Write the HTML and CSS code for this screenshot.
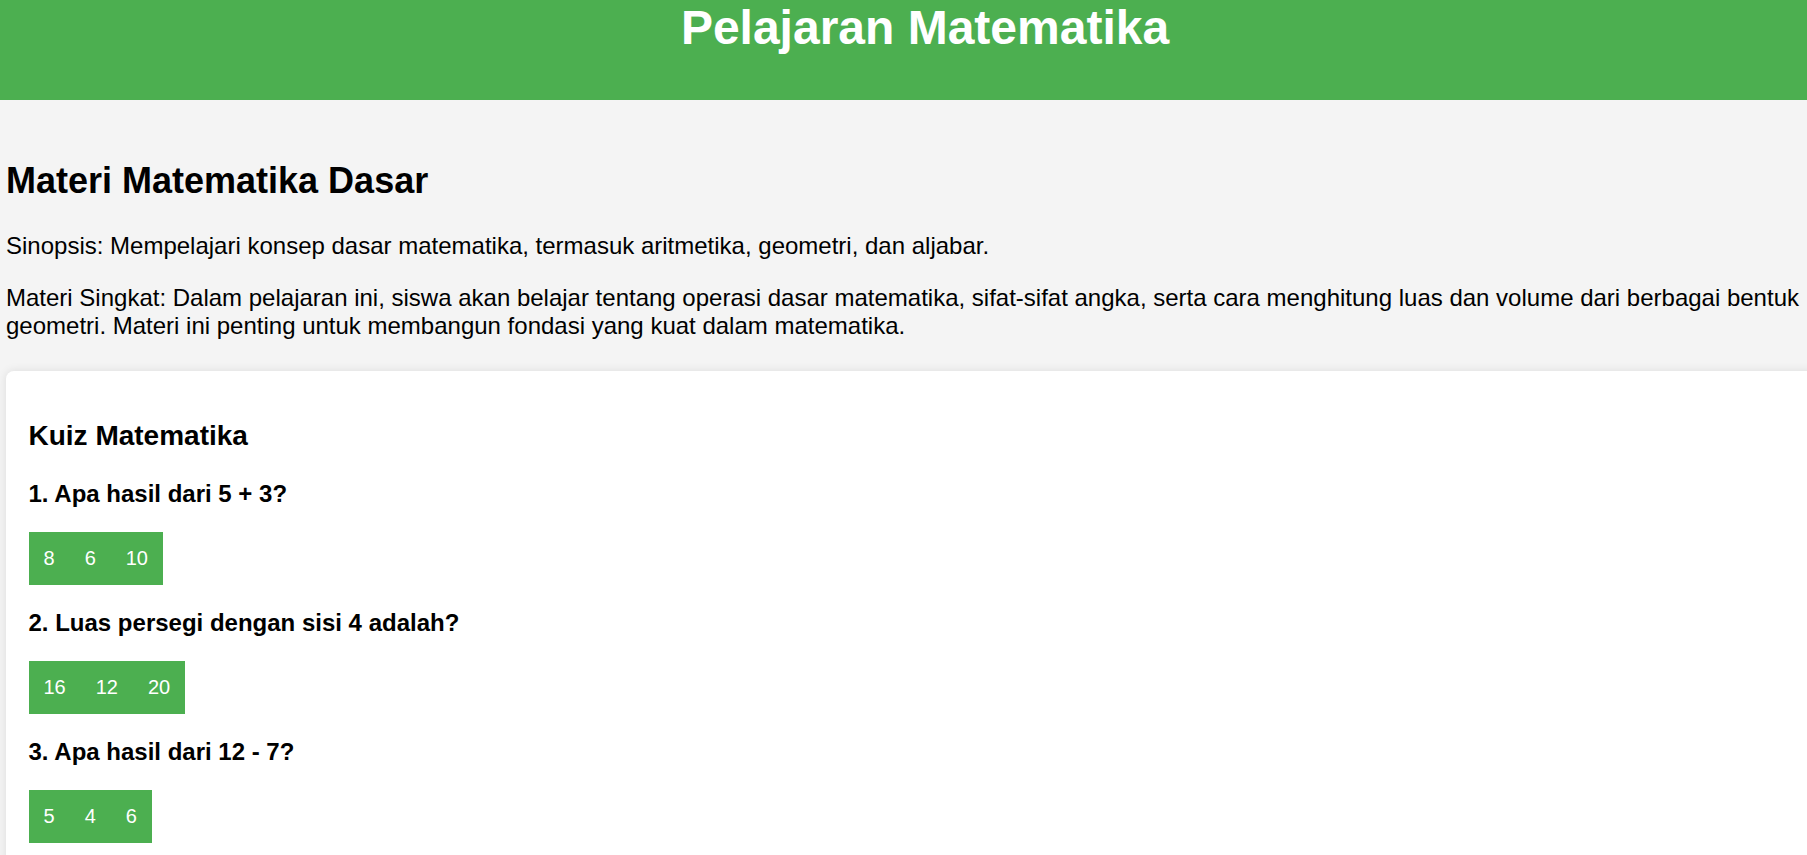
FILE: index.html
```html
<!DOCTYPE html>
<html lang="id">
<head>
<meta charset="utf-8">
<title>Pelajaran Matematika</title>
<link rel="stylesheet" href="styles.css">
</head>
<body>
<div class="page">
  <header class="site-header">
    <h1 class="site-title">Pelajaran Matematika</h1>
  </header>
  <main class="content">
    <h2 class="section-title">Materi Matematika Dasar</h2>
    <p class="text">Sinopsis: Mempelajari konsep dasar matematika, termasuk aritmetika, geometri, dan aljabar.</p>
    <p class="text">Materi Singkat: Dalam pelajaran ini, siswa akan belajar tentang operasi dasar matematika, sifat-sifat angka, serta cara menghitung luas dan volume dari berbagai bentuk geometri. Materi ini penting untuk membangun fondasi yang kuat dalam matematika.</p>
    <section class="quiz">
      <h3 class="quiz-title">Kuiz Matematika</h3>
      <div class="question">
        <p class="question-text">1. Apa hasil dari 5 + 3?</p>
        <div class="options"><button class="option">8</button><button class="option">6</button><button class="option">10</button></div>
      </div>
      <div class="question">
        <p class="question-text">2. Luas persegi dengan sisi 4 adalah?</p>
        <div class="options"><button class="option">16</button><button class="option">12</button><button class="option">20</button></div>
      </div>
      <div class="question">
        <p class="question-text">3. Apa hasil dari 12 - 7?</p>
        <div class="options"><button class="option">5</button><button class="option">4</button><button class="option">6</button></div>
      </div>
    </section>
  </main>
</div>
</body>
</html>
```
FILE: styles.css
```css
html, body {
  margin: 0;
  padding: 0;
  overflow: hidden;
  background: #f4f4f4;
}

body {
  font-family: "Liberation Sans", Arial, sans-serif;
  color: #000;
}

.page {
  width: 1850px;
}

.site-header {
  background: #4caf50;
  height: 100px;
  box-sizing: border-box;
  padding-top: 0;
}

.site-title {
  margin: 0;
  font-size: 48px;
  font-weight: bold;
  line-height: normal;
  color: #fff;
  text-align: center;
}

.content {
  padding: 30px 6px 0;
  background: #f4f4f4;
}

.section-title {
  font-size: 36px;
  font-weight: bold;
  margin: 30px 0;
  line-height: normal;
}

.text {
  font-size: 24px;
  line-height: normal;
  margin: 24px 0;
}

.quiz {
  margin-top: 31px;
  background: #fff;
  border-radius: 8px;
  box-shadow: 0 0 10px rgba(0, 0, 0, 0.1);
  padding: 21px 22.5px 40px;
}

.quiz-title {
  font-size: 28px;
  font-weight: bold;
  margin: 28px 0;
  line-height: normal;
}

.question-text {
  font-size: 24px;
  font-weight: bold;
  margin: 24px 0;
  line-height: normal;
}

.options {
  display: flex;
  margin: 24px 0;
}

.option {
  background: #4caf50;
  color: #fff;
  border: none;
  padding: 15px;
  font-family: "Liberation Sans", Arial, sans-serif;
  font-size: 20px;
  line-height: normal;
  margin: 0;
}
```
